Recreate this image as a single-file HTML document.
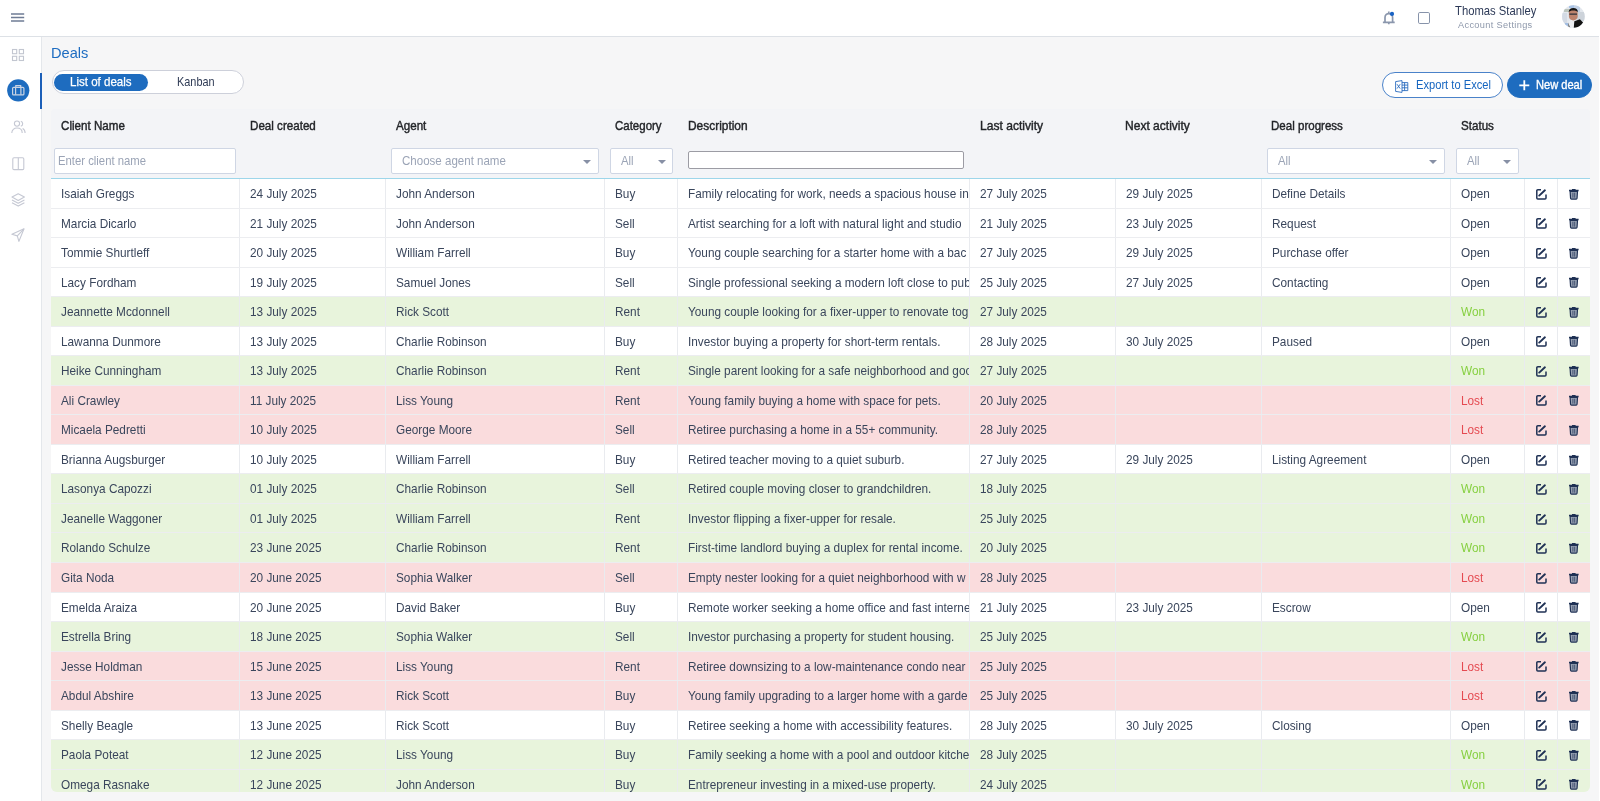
<!DOCTYPE html>
<html><head><meta charset="utf-8">
<style>
*{box-sizing:border-box;margin:0;padding:0}
html,body{width:1600px;height:801px;overflow:hidden}
body{background:#f6f6f7;font-family:"Liberation Sans",sans-serif;position:relative;color:#3b4658}
.abs{position:absolute}
.sx{display:inline-block;transform-origin:0 50%;white-space:nowrap}
#hdr{position:absolute;left:0;top:0;width:1599px;height:37px;background:#fff;border-bottom:1px solid #dde1e6}
#rstrip{position:absolute;left:1599px;top:0;width:1px;height:801px;background:#fff}
#side{position:absolute;left:0;top:37px;width:42px;height:764px;background:#fff;border-right:1px solid #e4e7eb}
#ind{position:absolute;left:40px;top:73px;width:2px;height:36px;background:#1c5fb8}
#title{position:absolute;left:51px;top:44.5px;font-size:14.6px;line-height:17px;color:#1d6cc1}
#pill{position:absolute;left:51.5px;top:70px;width:192.5px;height:24px;border:1px solid #cdd0da;border-radius:12px;background:#fff}
#pill .on{position:absolute;left:1.5px;top:2.5px;width:94px;height:17px;border-radius:9px;background:#1e6cbf;color:#fff;font-size:13px;line-height:17px;padding-left:16.2px}
#pill .off{position:absolute;left:124.5px;top:2.5px;font-size:12.6px;line-height:17px;color:#2f3b55}
.btn{position:absolute;height:26px;border-radius:13px;font-size:11.2px;line-height:24px}
#exp{left:1382px;top:72px;width:121px;border:1px solid #4a82c9;background:#fff;color:#1565c0}
#newd{left:1507px;top:72px;width:85px;background:#1e6cbf;color:#fff;border:1px solid #1e6cbf}
#tbl{position:absolute;left:51px;top:109px;width:1539px;height:683px;background:#f3f4f7;overflow:hidden;border-radius:4px 4px 6px 6px}
.hl{position:absolute;top:10px;font-size:12.4px;line-height:14px;color:#222428;-webkit-text-stroke:0.4px #222428;white-space:nowrap}
.inp{position:absolute;background:#fff;border:1px solid #cfd6e4;border-radius:2px;height:26px;top:39.4px;font-size:12.6px;line-height:24px;color:#9ba4b6;white-space:nowrap;overflow:hidden}
.inp .ar{position:absolute;right:6.5px;top:10.5px;width:0;height:0;border-left:4px solid transparent;border-right:4px solid transparent;border-top:4.5px solid #8790a5}
#dinp{position:absolute;left:637.4px;top:42.3px;width:275.3px;height:18.2px;background:#fff;border:1px solid #9c9ca4;border-radius:2px}
#bline{position:absolute;left:0;top:69px;width:1539px;height:1px;background:#9dd6ea}
.r{position:absolute;left:0;width:1539px;height:29.54px;background:#fff}
.r.won{background:#e8f4dc}
.r.lost{background:#fadcdd}
.r::after{content:"";position:absolute;left:0;right:0;bottom:0;height:1px;background:#ecedf0}
.c{position:absolute;top:0;height:29.54px;padding-left:9.8px;font-size:12.7px;line-height:29.54px;white-space:nowrap;overflow:hidden;border-left:1px solid #e9ebef;color:#3a465c}
.c span{display:inline-block;transform:translateY(1px) scaleX(0.93);transform-origin:0 50%}
.r .c:first-child{border-left:none;padding-left:9.6px}
.won .st{color:#86d040}
.lost .st{color:#e54a51}
.ico{padding-left:0}
.ic{position:absolute;top:9.7px;left:11px}
#root{position:absolute;left:0;top:0;width:1600px;height:801px;will-change:transform}
</style></head><body><div id="root">
<div id="hdr">
  <svg class="abs" style="left:11px;top:13px" width="14" height="10" viewBox="0 0 14 10"><path d="M0 1h13.2M0 4.5h13.2M0 8h13.2" stroke="#6f7c95" stroke-width="1.5"/></svg>
  <svg class="abs" style="left:1382px;top:10px" width="14" height="16" viewBox="0 0 14 16"><path d="M6.8 1.6v1.2M3 11.8V7.4a3.8 3.8 0 0 1 7.6 0v4.4M0.9 12.3h11.8M6.8 12.6v1.6" fill="none" stroke="#8b97ad" stroke-width="1.7"/><circle cx="10" cy="3.9" r="2.1" fill="#1a63c4"/></svg>
  <div class="abs" style="left:1418px;top:12px;width:12.3px;height:11.8px;border:1.8px solid #8793aa;border-radius:1.8px"></div>
  <div class="abs" style="left:1454.5px;top:4px;font-size:12.6px;line-height:14px;color:#2c3957;white-space:nowrap"><span class="sx" style="transform:scaleX(0.895)">Thomas Stanley</span></div>
  <div class="abs" style="left:1458px;top:19.5px;font-size:9.2px;line-height:11px;color:#8e98ab;letter-spacing:0.35px;white-space:nowrap">Account Settings</div>
  <svg class="abs" style="left:1562.2px;top:4.8px" width="23" height="23" viewBox="0 0 23 23"><defs><clipPath id="av"><circle cx="11.4" cy="11.5" r="11.3"/></clipPath></defs><g clip-path="url(#av)"><rect width="23" height="23" fill="#e3e7ed"/><rect x="12" y="0" width="6" height="9" fill="#c3d2e6"/><rect x="7" y="0" width="5" height="3" fill="#a9c3e6"/><rect x="2" y="4" width="6" height="3" fill="#bcc5bd"/><rect x="15" y="7" width="8" height="9" fill="#cdd3da"/><rect x="0" y="8" width="5" height="12" fill="#d3dae4"/><rect x="3" y="18" width="6" height="5" fill="#a2bde2"/><path d="M5.5 23l1.2-7 4-1.5 3 1.2L13 23z" fill="#eceef1"/><path d="M12.3 16.3l5.6-2.1 3.6 3.8-2 5H11.8z" fill="#121212"/><path d="M6.3 17.5l1.7 5.5H6.6z" fill="#2b2b2b"/><path d="M6.9 8.2c0-3.2 1.8-4.2 4.4-4.2s4.4 1.2 4.4 4.3v3.2c0 2.2-1.9 3.9-4.4 3.9s-4.4-1.7-4.4-3.9z" fill="#bd836c"/><path d="M6.6 7.4c.2-3 2-4.4 4.7-4.4s4.6 1.4 4.6 4.2c-.8-1-2.4-1.6-4.6-1.6s-3.9.6-4.7 1.8z" fill="#151515"/><path d="M7.4 9.1h7.6" stroke="#2c3038" stroke-width="1.3"/></g></svg>
</div>
<div id="rstrip"></div>
<div id="side">
  <svg class="abs" style="left:11px;top:11px" width="14" height="14" viewBox="0 0 14 14"><g fill="none" stroke="#c2c6d0" stroke-width="1.1"><rect x="1.5" y="1.5" width="4.2" height="4.2"/><rect x="8.3" y="1.5" width="4.2" height="4.2"/><rect x="1.5" y="8.3" width="4.2" height="4.2"/><rect x="8.3" y="8.3" width="4.2" height="4.2"/></g></svg>
  <svg class="abs" style="left:7px;top:42px" width="23" height="23" viewBox="0 0 23 23"><circle cx="11.25" cy="11.3" r="11.1" fill="#1e6cbf"/><g fill="none" stroke="#c9d3e3" stroke-width="1.2"><rect x="5.6" y="8.3" width="11.3" height="7.6" rx="1"/><path d="M8.8 8.3V6.6h4.9v1.7M8.6 8.5v7.2M13.9 8.5v7.2"/></g></svg>
  <svg class="abs" style="left:11px;top:83px" width="15" height="14" viewBox="0 0 15 14"><g fill="none" stroke="#c5c8d3" stroke-width="1.1"><circle cx="6" cy="3.6" r="2.6"/><path d="M0.8 13c0-3.2 2.3-5 5.2-5s5.2 1.8 5.2 5"/><path d="M9.8 1.2a2.6 2.6 0 0 1 0 5M11.6 8.5c1.5.7 2.5 2.2 2.5 4.5"/></g></svg>
  <svg class="abs" style="left:12px;top:119.5px" width="13" height="14" viewBox="0 0 13 14"><g fill="none" stroke="#c5c8d3" stroke-width="1.1"><rect x="0.8" y="0.8" width="11" height="11.8" rx="1.2"/><path d="M6.3 0.8v11.8"/></g></svg>
  <svg class="abs" style="left:11px;top:155.5px" width="15" height="14" viewBox="0 0 15 14"><g fill="none" stroke="#c5c8d3" stroke-width="1.1" stroke-linejoin="round"><path d="M7.2 0.8l6.2 3.3-6.2 3.3L1 4.1z"/><path d="M1 7l6.2 3.3L13.4 7"/><path d="M1 9.8l6.2 3.3 6.2-3.3"/></g></svg>
  <svg class="abs" style="left:11px;top:190.5px" width="14" height="14" viewBox="0 0 14 14"><g fill="none" stroke="#c5c8d3" stroke-width="1.1" stroke-linejoin="round"><path d="M13 0.8L0.9 6.3l5.4 1.6 1.6 5.5z"/><path d="M6.3 7.9L13 0.8"/></g></svg>
</div>
<div id="ind"></div>
<div id="title">Deals</div>
<div id="pill"><div class="on"><span class="sx" style="transform:translateY(-0.8px) scaleX(0.888);-webkit-text-stroke:0.25px #fff">List of deals</span></div><div class="off"><span class="sx" style="transform:scaleX(0.865)">Kanban</span></div></div>
<div class="btn" id="exp">
  <svg class="abs" style="left:12px;top:6.5px" width="14" height="13" viewBox="0 0 14 13"><g fill="none" stroke="#2a6cc0" stroke-width="0.9"><path d="M0.6 1.6l6.4-1v11.8l-6.4-1z"/><path d="M7 2.6h5.8v8H7M7 5.1h5.8M7 7.8h5.8M9.6 2.6v8"/><path d="M2 4.2l3.2 4.4M5.2 4.2L2 8.6"/></g></svg>
  <span class="abs" style="left:32.5px;top:0;font-size:12.6px"><span class="sx" style="transform:scaleX(0.885)">Export to Excel</span></span>
</div>
<div class="btn" id="newd">
  <svg class="abs" style="left:11px;top:7px" width="11" height="11" viewBox="0 0 11 11"><path d="M5.3 0.3v10M0.3 5.3h10" stroke="#fff" stroke-width="1.8"/></svg>
  <span class="abs" style="left:28px;top:0;font-size:12.2px"><span class="sx" style="transform:scaleX(0.91);-webkit-text-stroke:0.35px #fff">New deal</span></span>
</div>
<div id="tbl">
  <div class="hl" style="left:9.5px"><span class="sx" style="transform:scaleX(0.937)">Client Name</span></div>
  <div class="hl" style="left:198.5px"><span class="sx" style="transform:scaleX(0.937)">Deal created</span></div>
  <div class="hl" style="left:345px"><span class="sx" style="transform:scaleX(0.937)">Agent</span></div>
  <div class="hl" style="left:563.7px"><span class="sx" style="transform:scaleX(0.927)">Category</span></div>
  <div class="hl" style="left:637px"><span class="sx" style="transform:scaleX(0.962)">Description</span></div>
  <div class="hl" style="left:928.5px"><span class="sx" style="transform:scaleX(0.975)">Last activity</span></div>
  <div class="hl" style="left:1074px"><span class="sx" style="transform:scaleX(0.971)">Next activity</span></div>
  <div class="hl" style="left:1220px"><span class="sx" style="transform:scaleX(0.932)">Deal progress</span></div>
  <div class="hl" style="left:1409.5px"><span class="sx" style="transform:scaleX(0.936)">Status</span></div>

  <div class="inp" style="left:3.2px;width:181.6px;padding-left:3px;font-size:12.6px"><span class="sx" style="transform:scaleX(0.898)">Enter client name</span></div>
  <div class="inp" style="left:340.2px;width:207.7px;padding-left:9.5px"><span class="sx" style="transform:scaleX(0.916)">Choose agent name</span><span class="ar"></span></div>
  <div class="inp" style="left:559px;width:63px;padding-left:9.5px"><span class="sx" style="transform:scaleX(0.9)">All</span><span class="ar"></span></div>
  <div id="dinp"></div>
  <div class="inp" style="left:1216.1px;width:177.7px;padding-left:9.5px"><span class="sx" style="transform:scaleX(0.9)">All</span><span class="ar"></span></div>
  <div class="inp" style="left:1405.4px;width:62.5px;padding-left:9.5px"><span class="sx" style="transform:scaleX(0.9)">All</span><span class="ar"></span></div>
  <div id="bline"></div>
<div class="r " style="top:70.00px"><div class="c" style="left:0.00px;width:188.00px"><span>Isaiah Greggs</span></div><div class="c" style="left:188.00px;width:146.00px"><span>24 July 2025</span></div><div class="c" style="left:334.00px;width:219.00px"><span>John Anderson</span></div><div class="c" style="left:553.00px;width:73.00px"><span>Buy</span></div><div class="c" style="left:626.00px;width:292.00px"><span>Family relocating for work, needs a spacious house in</span></div><div class="c" style="left:918.00px;width:146.00px"><span>27 July 2025</span></div><div class="c" style="left:1064.00px;width:146.00px"><span>29 July 2025</span></div><div class="c" style="left:1210.00px;width:189.00px"><span>Define Details</span></div><div class="c st" style="left:1399.00px;width:74.00px"><span>Open</span></div><div class="c ico" style="left:1473.00px;width:33.00px"><svg class="ic" width="11" height="11" viewBox="0 0 11 11"><path d="M5 0.85H1.8a1 1 0 0 0-1 1V9a1 1 0 0 0 1 1H9a1 1 0 0 0 1-1V5.6" fill="none" stroke="#1f3154" stroke-width="1.5"/><path d="M3.2 6.6L8.9 1.3" stroke="#1f3154" stroke-width="1.9" stroke-linecap="round"/></svg></div><div class="c ico last" style="left:1506.00px;width:33.00px"><svg class="ic" width="10" height="11" viewBox="0 0 10 11"><path d="M0 0.8h9.6v1.5H0z M3 0.1h3.6v1.1H3z" fill="#1f3154"/><path d="M1.1 2.3h7.4l-.45 7a.9.9 0 0 1-.9.8H2.45a.9.9 0 0 1-.9-.8z" fill="#98a2b3" stroke="#1f3154" stroke-width="1.2"/><path d="M3.9 3.7v5M5.7 3.7v5" stroke="#1f3154" stroke-width="0.7"/></svg></div></div>
<div class="r " style="top:99.54px"><div class="c" style="left:0.00px;width:188.00px"><span>Marcia Dicarlo</span></div><div class="c" style="left:188.00px;width:146.00px"><span>21 July 2025</span></div><div class="c" style="left:334.00px;width:219.00px"><span>John Anderson</span></div><div class="c" style="left:553.00px;width:73.00px"><span>Sell</span></div><div class="c" style="left:626.00px;width:292.00px"><span>Artist searching for a loft with natural light and studio</span></div><div class="c" style="left:918.00px;width:146.00px"><span>21 July 2025</span></div><div class="c" style="left:1064.00px;width:146.00px"><span>23 July 2025</span></div><div class="c" style="left:1210.00px;width:189.00px"><span>Request</span></div><div class="c st" style="left:1399.00px;width:74.00px"><span>Open</span></div><div class="c ico" style="left:1473.00px;width:33.00px"><svg class="ic" width="11" height="11" viewBox="0 0 11 11"><path d="M5 0.85H1.8a1 1 0 0 0-1 1V9a1 1 0 0 0 1 1H9a1 1 0 0 0 1-1V5.6" fill="none" stroke="#1f3154" stroke-width="1.5"/><path d="M3.2 6.6L8.9 1.3" stroke="#1f3154" stroke-width="1.9" stroke-linecap="round"/></svg></div><div class="c ico last" style="left:1506.00px;width:33.00px"><svg class="ic" width="10" height="11" viewBox="0 0 10 11"><path d="M0 0.8h9.6v1.5H0z M3 0.1h3.6v1.1H3z" fill="#1f3154"/><path d="M1.1 2.3h7.4l-.45 7a.9.9 0 0 1-.9.8H2.45a.9.9 0 0 1-.9-.8z" fill="#98a2b3" stroke="#1f3154" stroke-width="1.2"/><path d="M3.9 3.7v5M5.7 3.7v5" stroke="#1f3154" stroke-width="0.7"/></svg></div></div>
<div class="r " style="top:129.08px"><div class="c" style="left:0.00px;width:188.00px"><span>Tommie Shurtleff</span></div><div class="c" style="left:188.00px;width:146.00px"><span>20 July 2025</span></div><div class="c" style="left:334.00px;width:219.00px"><span>William Farrell</span></div><div class="c" style="left:553.00px;width:73.00px"><span>Buy</span></div><div class="c" style="left:626.00px;width:292.00px"><span>Young couple searching for a starter home with a bac</span></div><div class="c" style="left:918.00px;width:146.00px"><span>27 July 2025</span></div><div class="c" style="left:1064.00px;width:146.00px"><span>29 July 2025</span></div><div class="c" style="left:1210.00px;width:189.00px"><span>Purchase offer</span></div><div class="c st" style="left:1399.00px;width:74.00px"><span>Open</span></div><div class="c ico" style="left:1473.00px;width:33.00px"><svg class="ic" width="11" height="11" viewBox="0 0 11 11"><path d="M5 0.85H1.8a1 1 0 0 0-1 1V9a1 1 0 0 0 1 1H9a1 1 0 0 0 1-1V5.6" fill="none" stroke="#1f3154" stroke-width="1.5"/><path d="M3.2 6.6L8.9 1.3" stroke="#1f3154" stroke-width="1.9" stroke-linecap="round"/></svg></div><div class="c ico last" style="left:1506.00px;width:33.00px"><svg class="ic" width="10" height="11" viewBox="0 0 10 11"><path d="M0 0.8h9.6v1.5H0z M3 0.1h3.6v1.1H3z" fill="#1f3154"/><path d="M1.1 2.3h7.4l-.45 7a.9.9 0 0 1-.9.8H2.45a.9.9 0 0 1-.9-.8z" fill="#98a2b3" stroke="#1f3154" stroke-width="1.2"/><path d="M3.9 3.7v5M5.7 3.7v5" stroke="#1f3154" stroke-width="0.7"/></svg></div></div>
<div class="r " style="top:158.62px"><div class="c" style="left:0.00px;width:188.00px"><span>Lacy Fordham</span></div><div class="c" style="left:188.00px;width:146.00px"><span>19 July 2025</span></div><div class="c" style="left:334.00px;width:219.00px"><span>Samuel Jones</span></div><div class="c" style="left:553.00px;width:73.00px"><span>Sell</span></div><div class="c" style="left:626.00px;width:292.00px"><span>Single professional seeking a modern loft close to pub</span></div><div class="c" style="left:918.00px;width:146.00px"><span>25 July 2025</span></div><div class="c" style="left:1064.00px;width:146.00px"><span>27 July 2025</span></div><div class="c" style="left:1210.00px;width:189.00px"><span>Contacting</span></div><div class="c st" style="left:1399.00px;width:74.00px"><span>Open</span></div><div class="c ico" style="left:1473.00px;width:33.00px"><svg class="ic" width="11" height="11" viewBox="0 0 11 11"><path d="M5 0.85H1.8a1 1 0 0 0-1 1V9a1 1 0 0 0 1 1H9a1 1 0 0 0 1-1V5.6" fill="none" stroke="#1f3154" stroke-width="1.5"/><path d="M3.2 6.6L8.9 1.3" stroke="#1f3154" stroke-width="1.9" stroke-linecap="round"/></svg></div><div class="c ico last" style="left:1506.00px;width:33.00px"><svg class="ic" width="10" height="11" viewBox="0 0 10 11"><path d="M0 0.8h9.6v1.5H0z M3 0.1h3.6v1.1H3z" fill="#1f3154"/><path d="M1.1 2.3h7.4l-.45 7a.9.9 0 0 1-.9.8H2.45a.9.9 0 0 1-.9-.8z" fill="#98a2b3" stroke="#1f3154" stroke-width="1.2"/><path d="M3.9 3.7v5M5.7 3.7v5" stroke="#1f3154" stroke-width="0.7"/></svg></div></div>
<div class="r won" style="top:188.16px"><div class="c" style="left:0.00px;width:188.00px"><span>Jeannette Mcdonnell</span></div><div class="c" style="left:188.00px;width:146.00px"><span>13 July 2025</span></div><div class="c" style="left:334.00px;width:219.00px"><span>Rick Scott</span></div><div class="c" style="left:553.00px;width:73.00px"><span>Rent</span></div><div class="c" style="left:626.00px;width:292.00px"><span>Young couple looking for a fixer-upper to renovate tog</span></div><div class="c" style="left:918.00px;width:146.00px"><span>27 July 2025</span></div><div class="c" style="left:1064.00px;width:146.00px"><span></span></div><div class="c" style="left:1210.00px;width:189.00px"><span></span></div><div class="c st" style="left:1399.00px;width:74.00px"><span>Won</span></div><div class="c ico" style="left:1473.00px;width:33.00px"><svg class="ic" width="11" height="11" viewBox="0 0 11 11"><path d="M5 0.85H1.8a1 1 0 0 0-1 1V9a1 1 0 0 0 1 1H9a1 1 0 0 0 1-1V5.6" fill="none" stroke="#1f3154" stroke-width="1.5"/><path d="M3.2 6.6L8.9 1.3" stroke="#1f3154" stroke-width="1.9" stroke-linecap="round"/></svg></div><div class="c ico last" style="left:1506.00px;width:33.00px"><svg class="ic" width="10" height="11" viewBox="0 0 10 11"><path d="M0 0.8h9.6v1.5H0z M3 0.1h3.6v1.1H3z" fill="#1f3154"/><path d="M1.1 2.3h7.4l-.45 7a.9.9 0 0 1-.9.8H2.45a.9.9 0 0 1-.9-.8z" fill="#98a2b3" stroke="#1f3154" stroke-width="1.2"/><path d="M3.9 3.7v5M5.7 3.7v5" stroke="#1f3154" stroke-width="0.7"/></svg></div></div>
<div class="r " style="top:217.70px"><div class="c" style="left:0.00px;width:188.00px"><span>Lawanna Dunmore</span></div><div class="c" style="left:188.00px;width:146.00px"><span>13 July 2025</span></div><div class="c" style="left:334.00px;width:219.00px"><span>Charlie Robinson</span></div><div class="c" style="left:553.00px;width:73.00px"><span>Buy</span></div><div class="c" style="left:626.00px;width:292.00px"><span>Investor buying a property for short-term rentals.</span></div><div class="c" style="left:918.00px;width:146.00px"><span>28 July 2025</span></div><div class="c" style="left:1064.00px;width:146.00px"><span>30 July 2025</span></div><div class="c" style="left:1210.00px;width:189.00px"><span>Paused</span></div><div class="c st" style="left:1399.00px;width:74.00px"><span>Open</span></div><div class="c ico" style="left:1473.00px;width:33.00px"><svg class="ic" width="11" height="11" viewBox="0 0 11 11"><path d="M5 0.85H1.8a1 1 0 0 0-1 1V9a1 1 0 0 0 1 1H9a1 1 0 0 0 1-1V5.6" fill="none" stroke="#1f3154" stroke-width="1.5"/><path d="M3.2 6.6L8.9 1.3" stroke="#1f3154" stroke-width="1.9" stroke-linecap="round"/></svg></div><div class="c ico last" style="left:1506.00px;width:33.00px"><svg class="ic" width="10" height="11" viewBox="0 0 10 11"><path d="M0 0.8h9.6v1.5H0z M3 0.1h3.6v1.1H3z" fill="#1f3154"/><path d="M1.1 2.3h7.4l-.45 7a.9.9 0 0 1-.9.8H2.45a.9.9 0 0 1-.9-.8z" fill="#98a2b3" stroke="#1f3154" stroke-width="1.2"/><path d="M3.9 3.7v5M5.7 3.7v5" stroke="#1f3154" stroke-width="0.7"/></svg></div></div>
<div class="r won" style="top:247.24px"><div class="c" style="left:0.00px;width:188.00px"><span>Heike Cunningham</span></div><div class="c" style="left:188.00px;width:146.00px"><span>13 July 2025</span></div><div class="c" style="left:334.00px;width:219.00px"><span>Charlie Robinson</span></div><div class="c" style="left:553.00px;width:73.00px"><span>Rent</span></div><div class="c" style="left:626.00px;width:292.00px"><span>Single parent looking for a safe neighborhood and goo</span></div><div class="c" style="left:918.00px;width:146.00px"><span>27 July 2025</span></div><div class="c" style="left:1064.00px;width:146.00px"><span></span></div><div class="c" style="left:1210.00px;width:189.00px"><span></span></div><div class="c st" style="left:1399.00px;width:74.00px"><span>Won</span></div><div class="c ico" style="left:1473.00px;width:33.00px"><svg class="ic" width="11" height="11" viewBox="0 0 11 11"><path d="M5 0.85H1.8a1 1 0 0 0-1 1V9a1 1 0 0 0 1 1H9a1 1 0 0 0 1-1V5.6" fill="none" stroke="#1f3154" stroke-width="1.5"/><path d="M3.2 6.6L8.9 1.3" stroke="#1f3154" stroke-width="1.9" stroke-linecap="round"/></svg></div><div class="c ico last" style="left:1506.00px;width:33.00px"><svg class="ic" width="10" height="11" viewBox="0 0 10 11"><path d="M0 0.8h9.6v1.5H0z M3 0.1h3.6v1.1H3z" fill="#1f3154"/><path d="M1.1 2.3h7.4l-.45 7a.9.9 0 0 1-.9.8H2.45a.9.9 0 0 1-.9-.8z" fill="#98a2b3" stroke="#1f3154" stroke-width="1.2"/><path d="M3.9 3.7v5M5.7 3.7v5" stroke="#1f3154" stroke-width="0.7"/></svg></div></div>
<div class="r lost" style="top:276.78px"><div class="c" style="left:0.00px;width:188.00px"><span>Ali Crawley</span></div><div class="c" style="left:188.00px;width:146.00px"><span>11 July 2025</span></div><div class="c" style="left:334.00px;width:219.00px"><span>Liss Young</span></div><div class="c" style="left:553.00px;width:73.00px"><span>Rent</span></div><div class="c" style="left:626.00px;width:292.00px"><span>Young family buying a home with space for pets.</span></div><div class="c" style="left:918.00px;width:146.00px"><span>20 July 2025</span></div><div class="c" style="left:1064.00px;width:146.00px"><span></span></div><div class="c" style="left:1210.00px;width:189.00px"><span></span></div><div class="c st" style="left:1399.00px;width:74.00px"><span>Lost</span></div><div class="c ico" style="left:1473.00px;width:33.00px"><svg class="ic" width="11" height="11" viewBox="0 0 11 11"><path d="M5 0.85H1.8a1 1 0 0 0-1 1V9a1 1 0 0 0 1 1H9a1 1 0 0 0 1-1V5.6" fill="none" stroke="#1f3154" stroke-width="1.5"/><path d="M3.2 6.6L8.9 1.3" stroke="#1f3154" stroke-width="1.9" stroke-linecap="round"/></svg></div><div class="c ico last" style="left:1506.00px;width:33.00px"><svg class="ic" width="10" height="11" viewBox="0 0 10 11"><path d="M0 0.8h9.6v1.5H0z M3 0.1h3.6v1.1H3z" fill="#1f3154"/><path d="M1.1 2.3h7.4l-.45 7a.9.9 0 0 1-.9.8H2.45a.9.9 0 0 1-.9-.8z" fill="#98a2b3" stroke="#1f3154" stroke-width="1.2"/><path d="M3.9 3.7v5M5.7 3.7v5" stroke="#1f3154" stroke-width="0.7"/></svg></div></div>
<div class="r lost" style="top:306.32px"><div class="c" style="left:0.00px;width:188.00px"><span>Micaela Pedretti</span></div><div class="c" style="left:188.00px;width:146.00px"><span>10 July 2025</span></div><div class="c" style="left:334.00px;width:219.00px"><span>George Moore</span></div><div class="c" style="left:553.00px;width:73.00px"><span>Sell</span></div><div class="c" style="left:626.00px;width:292.00px"><span>Retiree purchasing a home in a 55+ community.</span></div><div class="c" style="left:918.00px;width:146.00px"><span>28 July 2025</span></div><div class="c" style="left:1064.00px;width:146.00px"><span></span></div><div class="c" style="left:1210.00px;width:189.00px"><span></span></div><div class="c st" style="left:1399.00px;width:74.00px"><span>Lost</span></div><div class="c ico" style="left:1473.00px;width:33.00px"><svg class="ic" width="11" height="11" viewBox="0 0 11 11"><path d="M5 0.85H1.8a1 1 0 0 0-1 1V9a1 1 0 0 0 1 1H9a1 1 0 0 0 1-1V5.6" fill="none" stroke="#1f3154" stroke-width="1.5"/><path d="M3.2 6.6L8.9 1.3" stroke="#1f3154" stroke-width="1.9" stroke-linecap="round"/></svg></div><div class="c ico last" style="left:1506.00px;width:33.00px"><svg class="ic" width="10" height="11" viewBox="0 0 10 11"><path d="M0 0.8h9.6v1.5H0z M3 0.1h3.6v1.1H3z" fill="#1f3154"/><path d="M1.1 2.3h7.4l-.45 7a.9.9 0 0 1-.9.8H2.45a.9.9 0 0 1-.9-.8z" fill="#98a2b3" stroke="#1f3154" stroke-width="1.2"/><path d="M3.9 3.7v5M5.7 3.7v5" stroke="#1f3154" stroke-width="0.7"/></svg></div></div>
<div class="r " style="top:335.86px"><div class="c" style="left:0.00px;width:188.00px"><span>Brianna Augsburger</span></div><div class="c" style="left:188.00px;width:146.00px"><span>10 July 2025</span></div><div class="c" style="left:334.00px;width:219.00px"><span>William Farrell</span></div><div class="c" style="left:553.00px;width:73.00px"><span>Buy</span></div><div class="c" style="left:626.00px;width:292.00px"><span>Retired teacher moving to a quiet suburb.</span></div><div class="c" style="left:918.00px;width:146.00px"><span>27 July 2025</span></div><div class="c" style="left:1064.00px;width:146.00px"><span>29 July 2025</span></div><div class="c" style="left:1210.00px;width:189.00px"><span>Listing Agreement</span></div><div class="c st" style="left:1399.00px;width:74.00px"><span>Open</span></div><div class="c ico" style="left:1473.00px;width:33.00px"><svg class="ic" width="11" height="11" viewBox="0 0 11 11"><path d="M5 0.85H1.8a1 1 0 0 0-1 1V9a1 1 0 0 0 1 1H9a1 1 0 0 0 1-1V5.6" fill="none" stroke="#1f3154" stroke-width="1.5"/><path d="M3.2 6.6L8.9 1.3" stroke="#1f3154" stroke-width="1.9" stroke-linecap="round"/></svg></div><div class="c ico last" style="left:1506.00px;width:33.00px"><svg class="ic" width="10" height="11" viewBox="0 0 10 11"><path d="M0 0.8h9.6v1.5H0z M3 0.1h3.6v1.1H3z" fill="#1f3154"/><path d="M1.1 2.3h7.4l-.45 7a.9.9 0 0 1-.9.8H2.45a.9.9 0 0 1-.9-.8z" fill="#98a2b3" stroke="#1f3154" stroke-width="1.2"/><path d="M3.9 3.7v5M5.7 3.7v5" stroke="#1f3154" stroke-width="0.7"/></svg></div></div>
<div class="r won" style="top:365.40px"><div class="c" style="left:0.00px;width:188.00px"><span>Lasonya Capozzi</span></div><div class="c" style="left:188.00px;width:146.00px"><span>01 July 2025</span></div><div class="c" style="left:334.00px;width:219.00px"><span>Charlie Robinson</span></div><div class="c" style="left:553.00px;width:73.00px"><span>Sell</span></div><div class="c" style="left:626.00px;width:292.00px"><span>Retired couple moving closer to grandchildren.</span></div><div class="c" style="left:918.00px;width:146.00px"><span>18 July 2025</span></div><div class="c" style="left:1064.00px;width:146.00px"><span></span></div><div class="c" style="left:1210.00px;width:189.00px"><span></span></div><div class="c st" style="left:1399.00px;width:74.00px"><span>Won</span></div><div class="c ico" style="left:1473.00px;width:33.00px"><svg class="ic" width="11" height="11" viewBox="0 0 11 11"><path d="M5 0.85H1.8a1 1 0 0 0-1 1V9a1 1 0 0 0 1 1H9a1 1 0 0 0 1-1V5.6" fill="none" stroke="#1f3154" stroke-width="1.5"/><path d="M3.2 6.6L8.9 1.3" stroke="#1f3154" stroke-width="1.9" stroke-linecap="round"/></svg></div><div class="c ico last" style="left:1506.00px;width:33.00px"><svg class="ic" width="10" height="11" viewBox="0 0 10 11"><path d="M0 0.8h9.6v1.5H0z M3 0.1h3.6v1.1H3z" fill="#1f3154"/><path d="M1.1 2.3h7.4l-.45 7a.9.9 0 0 1-.9.8H2.45a.9.9 0 0 1-.9-.8z" fill="#98a2b3" stroke="#1f3154" stroke-width="1.2"/><path d="M3.9 3.7v5M5.7 3.7v5" stroke="#1f3154" stroke-width="0.7"/></svg></div></div>
<div class="r won" style="top:394.94px"><div class="c" style="left:0.00px;width:188.00px"><span>Jeanelle Waggoner</span></div><div class="c" style="left:188.00px;width:146.00px"><span>01 July 2025</span></div><div class="c" style="left:334.00px;width:219.00px"><span>William Farrell</span></div><div class="c" style="left:553.00px;width:73.00px"><span>Rent</span></div><div class="c" style="left:626.00px;width:292.00px"><span>Investor flipping a fixer-upper for resale.</span></div><div class="c" style="left:918.00px;width:146.00px"><span>25 July 2025</span></div><div class="c" style="left:1064.00px;width:146.00px"><span></span></div><div class="c" style="left:1210.00px;width:189.00px"><span></span></div><div class="c st" style="left:1399.00px;width:74.00px"><span>Won</span></div><div class="c ico" style="left:1473.00px;width:33.00px"><svg class="ic" width="11" height="11" viewBox="0 0 11 11"><path d="M5 0.85H1.8a1 1 0 0 0-1 1V9a1 1 0 0 0 1 1H9a1 1 0 0 0 1-1V5.6" fill="none" stroke="#1f3154" stroke-width="1.5"/><path d="M3.2 6.6L8.9 1.3" stroke="#1f3154" stroke-width="1.9" stroke-linecap="round"/></svg></div><div class="c ico last" style="left:1506.00px;width:33.00px"><svg class="ic" width="10" height="11" viewBox="0 0 10 11"><path d="M0 0.8h9.6v1.5H0z M3 0.1h3.6v1.1H3z" fill="#1f3154"/><path d="M1.1 2.3h7.4l-.45 7a.9.9 0 0 1-.9.8H2.45a.9.9 0 0 1-.9-.8z" fill="#98a2b3" stroke="#1f3154" stroke-width="1.2"/><path d="M3.9 3.7v5M5.7 3.7v5" stroke="#1f3154" stroke-width="0.7"/></svg></div></div>
<div class="r won" style="top:424.48px"><div class="c" style="left:0.00px;width:188.00px"><span>Rolando Schulze</span></div><div class="c" style="left:188.00px;width:146.00px"><span>23 June 2025</span></div><div class="c" style="left:334.00px;width:219.00px"><span>Charlie Robinson</span></div><div class="c" style="left:553.00px;width:73.00px"><span>Rent</span></div><div class="c" style="left:626.00px;width:292.00px"><span>First-time landlord buying a duplex for rental income.</span></div><div class="c" style="left:918.00px;width:146.00px"><span>20 July 2025</span></div><div class="c" style="left:1064.00px;width:146.00px"><span></span></div><div class="c" style="left:1210.00px;width:189.00px"><span></span></div><div class="c st" style="left:1399.00px;width:74.00px"><span>Won</span></div><div class="c ico" style="left:1473.00px;width:33.00px"><svg class="ic" width="11" height="11" viewBox="0 0 11 11"><path d="M5 0.85H1.8a1 1 0 0 0-1 1V9a1 1 0 0 0 1 1H9a1 1 0 0 0 1-1V5.6" fill="none" stroke="#1f3154" stroke-width="1.5"/><path d="M3.2 6.6L8.9 1.3" stroke="#1f3154" stroke-width="1.9" stroke-linecap="round"/></svg></div><div class="c ico last" style="left:1506.00px;width:33.00px"><svg class="ic" width="10" height="11" viewBox="0 0 10 11"><path d="M0 0.8h9.6v1.5H0z M3 0.1h3.6v1.1H3z" fill="#1f3154"/><path d="M1.1 2.3h7.4l-.45 7a.9.9 0 0 1-.9.8H2.45a.9.9 0 0 1-.9-.8z" fill="#98a2b3" stroke="#1f3154" stroke-width="1.2"/><path d="M3.9 3.7v5M5.7 3.7v5" stroke="#1f3154" stroke-width="0.7"/></svg></div></div>
<div class="r lost" style="top:454.02px"><div class="c" style="left:0.00px;width:188.00px"><span>Gita Noda</span></div><div class="c" style="left:188.00px;width:146.00px"><span>20 June 2025</span></div><div class="c" style="left:334.00px;width:219.00px"><span>Sophia Walker</span></div><div class="c" style="left:553.00px;width:73.00px"><span>Sell</span></div><div class="c" style="left:626.00px;width:292.00px"><span>Empty nester looking for a quiet neighborhood with w</span></div><div class="c" style="left:918.00px;width:146.00px"><span>28 July 2025</span></div><div class="c" style="left:1064.00px;width:146.00px"><span></span></div><div class="c" style="left:1210.00px;width:189.00px"><span></span></div><div class="c st" style="left:1399.00px;width:74.00px"><span>Lost</span></div><div class="c ico" style="left:1473.00px;width:33.00px"><svg class="ic" width="11" height="11" viewBox="0 0 11 11"><path d="M5 0.85H1.8a1 1 0 0 0-1 1V9a1 1 0 0 0 1 1H9a1 1 0 0 0 1-1V5.6" fill="none" stroke="#1f3154" stroke-width="1.5"/><path d="M3.2 6.6L8.9 1.3" stroke="#1f3154" stroke-width="1.9" stroke-linecap="round"/></svg></div><div class="c ico last" style="left:1506.00px;width:33.00px"><svg class="ic" width="10" height="11" viewBox="0 0 10 11"><path d="M0 0.8h9.6v1.5H0z M3 0.1h3.6v1.1H3z" fill="#1f3154"/><path d="M1.1 2.3h7.4l-.45 7a.9.9 0 0 1-.9.8H2.45a.9.9 0 0 1-.9-.8z" fill="#98a2b3" stroke="#1f3154" stroke-width="1.2"/><path d="M3.9 3.7v5M5.7 3.7v5" stroke="#1f3154" stroke-width="0.7"/></svg></div></div>
<div class="r " style="top:483.56px"><div class="c" style="left:0.00px;width:188.00px"><span>Emelda Araiza</span></div><div class="c" style="left:188.00px;width:146.00px"><span>20 June 2025</span></div><div class="c" style="left:334.00px;width:219.00px"><span>David Baker</span></div><div class="c" style="left:553.00px;width:73.00px"><span>Buy</span></div><div class="c" style="left:626.00px;width:292.00px"><span>Remote worker seeking a home office and fast interne</span></div><div class="c" style="left:918.00px;width:146.00px"><span>21 July 2025</span></div><div class="c" style="left:1064.00px;width:146.00px"><span>23 July 2025</span></div><div class="c" style="left:1210.00px;width:189.00px"><span>Escrow</span></div><div class="c st" style="left:1399.00px;width:74.00px"><span>Open</span></div><div class="c ico" style="left:1473.00px;width:33.00px"><svg class="ic" width="11" height="11" viewBox="0 0 11 11"><path d="M5 0.85H1.8a1 1 0 0 0-1 1V9a1 1 0 0 0 1 1H9a1 1 0 0 0 1-1V5.6" fill="none" stroke="#1f3154" stroke-width="1.5"/><path d="M3.2 6.6L8.9 1.3" stroke="#1f3154" stroke-width="1.9" stroke-linecap="round"/></svg></div><div class="c ico last" style="left:1506.00px;width:33.00px"><svg class="ic" width="10" height="11" viewBox="0 0 10 11"><path d="M0 0.8h9.6v1.5H0z M3 0.1h3.6v1.1H3z" fill="#1f3154"/><path d="M1.1 2.3h7.4l-.45 7a.9.9 0 0 1-.9.8H2.45a.9.9 0 0 1-.9-.8z" fill="#98a2b3" stroke="#1f3154" stroke-width="1.2"/><path d="M3.9 3.7v5M5.7 3.7v5" stroke="#1f3154" stroke-width="0.7"/></svg></div></div>
<div class="r won" style="top:513.10px"><div class="c" style="left:0.00px;width:188.00px"><span>Estrella Bring</span></div><div class="c" style="left:188.00px;width:146.00px"><span>18 June 2025</span></div><div class="c" style="left:334.00px;width:219.00px"><span>Sophia Walker</span></div><div class="c" style="left:553.00px;width:73.00px"><span>Sell</span></div><div class="c" style="left:626.00px;width:292.00px"><span>Investor purchasing a property for student housing.</span></div><div class="c" style="left:918.00px;width:146.00px"><span>25 July 2025</span></div><div class="c" style="left:1064.00px;width:146.00px"><span></span></div><div class="c" style="left:1210.00px;width:189.00px"><span></span></div><div class="c st" style="left:1399.00px;width:74.00px"><span>Won</span></div><div class="c ico" style="left:1473.00px;width:33.00px"><svg class="ic" width="11" height="11" viewBox="0 0 11 11"><path d="M5 0.85H1.8a1 1 0 0 0-1 1V9a1 1 0 0 0 1 1H9a1 1 0 0 0 1-1V5.6" fill="none" stroke="#1f3154" stroke-width="1.5"/><path d="M3.2 6.6L8.9 1.3" stroke="#1f3154" stroke-width="1.9" stroke-linecap="round"/></svg></div><div class="c ico last" style="left:1506.00px;width:33.00px"><svg class="ic" width="10" height="11" viewBox="0 0 10 11"><path d="M0 0.8h9.6v1.5H0z M3 0.1h3.6v1.1H3z" fill="#1f3154"/><path d="M1.1 2.3h7.4l-.45 7a.9.9 0 0 1-.9.8H2.45a.9.9 0 0 1-.9-.8z" fill="#98a2b3" stroke="#1f3154" stroke-width="1.2"/><path d="M3.9 3.7v5M5.7 3.7v5" stroke="#1f3154" stroke-width="0.7"/></svg></div></div>
<div class="r lost" style="top:542.64px"><div class="c" style="left:0.00px;width:188.00px"><span>Jesse Holdman</span></div><div class="c" style="left:188.00px;width:146.00px"><span>15 June 2025</span></div><div class="c" style="left:334.00px;width:219.00px"><span>Liss Young</span></div><div class="c" style="left:553.00px;width:73.00px"><span>Rent</span></div><div class="c" style="left:626.00px;width:292.00px"><span>Retiree downsizing to a low-maintenance condo near</span></div><div class="c" style="left:918.00px;width:146.00px"><span>25 July 2025</span></div><div class="c" style="left:1064.00px;width:146.00px"><span></span></div><div class="c" style="left:1210.00px;width:189.00px"><span></span></div><div class="c st" style="left:1399.00px;width:74.00px"><span>Lost</span></div><div class="c ico" style="left:1473.00px;width:33.00px"><svg class="ic" width="11" height="11" viewBox="0 0 11 11"><path d="M5 0.85H1.8a1 1 0 0 0-1 1V9a1 1 0 0 0 1 1H9a1 1 0 0 0 1-1V5.6" fill="none" stroke="#1f3154" stroke-width="1.5"/><path d="M3.2 6.6L8.9 1.3" stroke="#1f3154" stroke-width="1.9" stroke-linecap="round"/></svg></div><div class="c ico last" style="left:1506.00px;width:33.00px"><svg class="ic" width="10" height="11" viewBox="0 0 10 11"><path d="M0 0.8h9.6v1.5H0z M3 0.1h3.6v1.1H3z" fill="#1f3154"/><path d="M1.1 2.3h7.4l-.45 7a.9.9 0 0 1-.9.8H2.45a.9.9 0 0 1-.9-.8z" fill="#98a2b3" stroke="#1f3154" stroke-width="1.2"/><path d="M3.9 3.7v5M5.7 3.7v5" stroke="#1f3154" stroke-width="0.7"/></svg></div></div>
<div class="r lost" style="top:572.18px"><div class="c" style="left:0.00px;width:188.00px"><span>Abdul Abshire</span></div><div class="c" style="left:188.00px;width:146.00px"><span>13 June 2025</span></div><div class="c" style="left:334.00px;width:219.00px"><span>Rick Scott</span></div><div class="c" style="left:553.00px;width:73.00px"><span>Buy</span></div><div class="c" style="left:626.00px;width:292.00px"><span>Young family upgrading to a larger home with a garde</span></div><div class="c" style="left:918.00px;width:146.00px"><span>25 July 2025</span></div><div class="c" style="left:1064.00px;width:146.00px"><span></span></div><div class="c" style="left:1210.00px;width:189.00px"><span></span></div><div class="c st" style="left:1399.00px;width:74.00px"><span>Lost</span></div><div class="c ico" style="left:1473.00px;width:33.00px"><svg class="ic" width="11" height="11" viewBox="0 0 11 11"><path d="M5 0.85H1.8a1 1 0 0 0-1 1V9a1 1 0 0 0 1 1H9a1 1 0 0 0 1-1V5.6" fill="none" stroke="#1f3154" stroke-width="1.5"/><path d="M3.2 6.6L8.9 1.3" stroke="#1f3154" stroke-width="1.9" stroke-linecap="round"/></svg></div><div class="c ico last" style="left:1506.00px;width:33.00px"><svg class="ic" width="10" height="11" viewBox="0 0 10 11"><path d="M0 0.8h9.6v1.5H0z M3 0.1h3.6v1.1H3z" fill="#1f3154"/><path d="M1.1 2.3h7.4l-.45 7a.9.9 0 0 1-.9.8H2.45a.9.9 0 0 1-.9-.8z" fill="#98a2b3" stroke="#1f3154" stroke-width="1.2"/><path d="M3.9 3.7v5M5.7 3.7v5" stroke="#1f3154" stroke-width="0.7"/></svg></div></div>
<div class="r " style="top:601.72px"><div class="c" style="left:0.00px;width:188.00px"><span>Shelly Beagle</span></div><div class="c" style="left:188.00px;width:146.00px"><span>13 June 2025</span></div><div class="c" style="left:334.00px;width:219.00px"><span>Rick Scott</span></div><div class="c" style="left:553.00px;width:73.00px"><span>Buy</span></div><div class="c" style="left:626.00px;width:292.00px"><span>Retiree seeking a home with accessibility features.</span></div><div class="c" style="left:918.00px;width:146.00px"><span>28 July 2025</span></div><div class="c" style="left:1064.00px;width:146.00px"><span>30 July 2025</span></div><div class="c" style="left:1210.00px;width:189.00px"><span>Closing</span></div><div class="c st" style="left:1399.00px;width:74.00px"><span>Open</span></div><div class="c ico" style="left:1473.00px;width:33.00px"><svg class="ic" width="11" height="11" viewBox="0 0 11 11"><path d="M5 0.85H1.8a1 1 0 0 0-1 1V9a1 1 0 0 0 1 1H9a1 1 0 0 0 1-1V5.6" fill="none" stroke="#1f3154" stroke-width="1.5"/><path d="M3.2 6.6L8.9 1.3" stroke="#1f3154" stroke-width="1.9" stroke-linecap="round"/></svg></div><div class="c ico last" style="left:1506.00px;width:33.00px"><svg class="ic" width="10" height="11" viewBox="0 0 10 11"><path d="M0 0.8h9.6v1.5H0z M3 0.1h3.6v1.1H3z" fill="#1f3154"/><path d="M1.1 2.3h7.4l-.45 7a.9.9 0 0 1-.9.8H2.45a.9.9 0 0 1-.9-.8z" fill="#98a2b3" stroke="#1f3154" stroke-width="1.2"/><path d="M3.9 3.7v5M5.7 3.7v5" stroke="#1f3154" stroke-width="0.7"/></svg></div></div>
<div class="r won" style="top:631.26px"><div class="c" style="left:0.00px;width:188.00px"><span>Paola Poteat</span></div><div class="c" style="left:188.00px;width:146.00px"><span>12 June 2025</span></div><div class="c" style="left:334.00px;width:219.00px"><span>Liss Young</span></div><div class="c" style="left:553.00px;width:73.00px"><span>Buy</span></div><div class="c" style="left:626.00px;width:292.00px"><span>Family seeking a home with a pool and outdoor kitche</span></div><div class="c" style="left:918.00px;width:146.00px"><span>28 July 2025</span></div><div class="c" style="left:1064.00px;width:146.00px"><span></span></div><div class="c" style="left:1210.00px;width:189.00px"><span></span></div><div class="c st" style="left:1399.00px;width:74.00px"><span>Won</span></div><div class="c ico" style="left:1473.00px;width:33.00px"><svg class="ic" width="11" height="11" viewBox="0 0 11 11"><path d="M5 0.85H1.8a1 1 0 0 0-1 1V9a1 1 0 0 0 1 1H9a1 1 0 0 0 1-1V5.6" fill="none" stroke="#1f3154" stroke-width="1.5"/><path d="M3.2 6.6L8.9 1.3" stroke="#1f3154" stroke-width="1.9" stroke-linecap="round"/></svg></div><div class="c ico last" style="left:1506.00px;width:33.00px"><svg class="ic" width="10" height="11" viewBox="0 0 10 11"><path d="M0 0.8h9.6v1.5H0z M3 0.1h3.6v1.1H3z" fill="#1f3154"/><path d="M1.1 2.3h7.4l-.45 7a.9.9 0 0 1-.9.8H2.45a.9.9 0 0 1-.9-.8z" fill="#98a2b3" stroke="#1f3154" stroke-width="1.2"/><path d="M3.9 3.7v5M5.7 3.7v5" stroke="#1f3154" stroke-width="0.7"/></svg></div></div>
<div class="r won" style="top:660.80px"><div class="c" style="left:0.00px;width:188.00px"><span>Omega Rasnake</span></div><div class="c" style="left:188.00px;width:146.00px"><span>12 June 2025</span></div><div class="c" style="left:334.00px;width:219.00px"><span>John Anderson</span></div><div class="c" style="left:553.00px;width:73.00px"><span>Buy</span></div><div class="c" style="left:626.00px;width:292.00px"><span>Entrepreneur investing in a mixed-use property.</span></div><div class="c" style="left:918.00px;width:146.00px"><span>24 July 2025</span></div><div class="c" style="left:1064.00px;width:146.00px"><span></span></div><div class="c" style="left:1210.00px;width:189.00px"><span></span></div><div class="c st" style="left:1399.00px;width:74.00px"><span>Won</span></div><div class="c ico" style="left:1473.00px;width:33.00px"><svg class="ic" width="11" height="11" viewBox="0 0 11 11"><path d="M5 0.85H1.8a1 1 0 0 0-1 1V9a1 1 0 0 0 1 1H9a1 1 0 0 0 1-1V5.6" fill="none" stroke="#1f3154" stroke-width="1.5"/><path d="M3.2 6.6L8.9 1.3" stroke="#1f3154" stroke-width="1.9" stroke-linecap="round"/></svg></div><div class="c ico last" style="left:1506.00px;width:33.00px"><svg class="ic" width="10" height="11" viewBox="0 0 10 11"><path d="M0 0.8h9.6v1.5H0z M3 0.1h3.6v1.1H3z" fill="#1f3154"/><path d="M1.1 2.3h7.4l-.45 7a.9.9 0 0 1-.9.8H2.45a.9.9 0 0 1-.9-.8z" fill="#98a2b3" stroke="#1f3154" stroke-width="1.2"/><path d="M3.9 3.7v5M5.7 3.7v5" stroke="#1f3154" stroke-width="0.7"/></svg></div></div>
</div>
</div></body></html>
